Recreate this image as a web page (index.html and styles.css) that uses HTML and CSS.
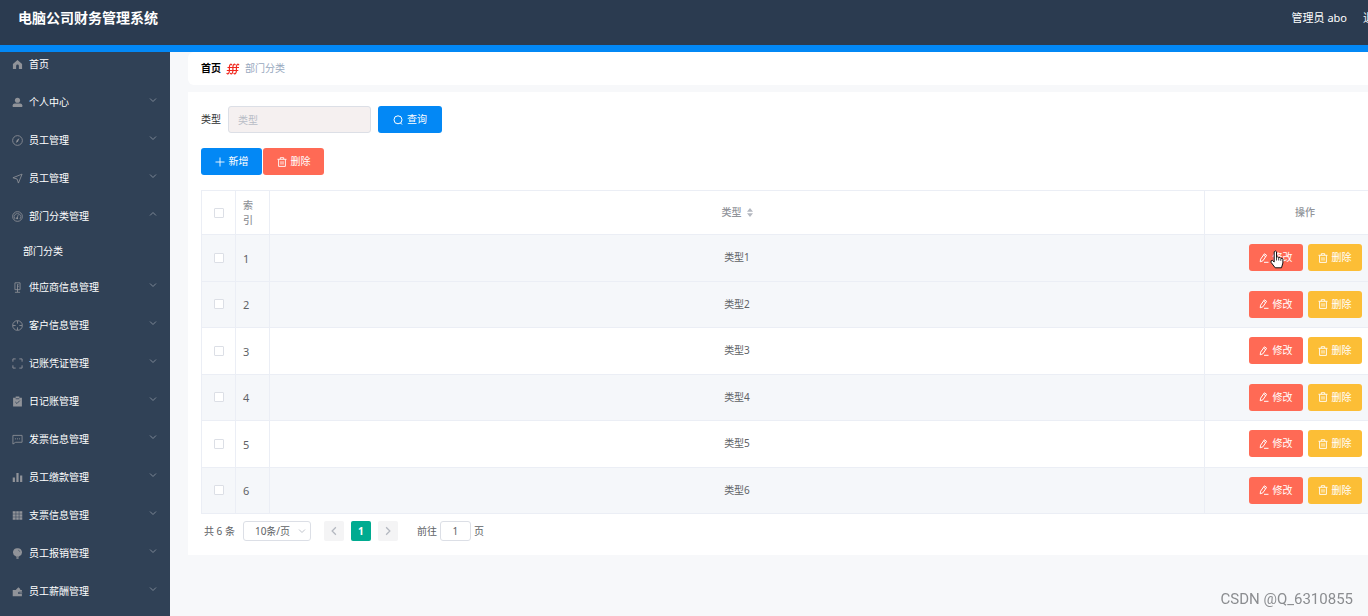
FILE: index.html
```html
<!DOCTYPE html>
<html lang="zh-CN">
<head>
<meta charset="utf-8">
<title>电脑公司财务管理系统</title>
<link rel="stylesheet" href="styles.css">
</head>
<body>
<svg class="sprite" aria-hidden="true">
  <symbol id="down" viewBox="0 0 8 8"><path d="M1 2.5 4 5.5 7 2.5" fill="none" stroke="currentColor"/></symbol>
  <symbol id="edit" viewBox="0 0 10 10"><path d="M1.2 8.8 1.6 6.2 5.4 .8 7.6 2.3 3.9 7.8 1.2 8.8M4.6 2.1 6.7 3.6M5 9.3H9.5" fill="none" stroke="currentColor"/></symbol>
  <symbol id="trash" viewBox="0 0 10 10"><path d="M.5 2.3H9.5M3.3 2V.7H6.7V2M1.6 2.5V9.4H8.4V2.5M4 4.2V7.6M6 4.2V7.6" fill="none" stroke="currentColor" stroke-width=".9"/></symbol>
</svg>
<div class="app">
  <header class="header">
    <h1 class="title">电脑公司财务管理系统</h1>
    <div class="user"><span>管理员 abo</span><a class="logout" href="#">退出登录</a></div>
  </header>
  <div class="body">
    <nav class="side">
      <a class="item home" href="#"><svg class="ico" viewBox="0 0 12 12"><path d="M6 1 11 5.5V11H7.5V7.5A1.5 1.5 0 0 0 4.5 7.5V11H1V5.5Z" fill="currentColor"/></svg>首页</a>
      <a class="item" href="#"><svg class="ico" viewBox="0 0 12 12"><circle cx="6" cy="3.6" r="2.8" fill="currentColor"/><path d="M.8 11V9Q.8 7 3 7H9Q11.2 7 11.2 9V11Z" fill="currentColor"/></svg>个人中心<svg class="arrow"><use href="#down"/></svg></a>
      <a class="item" href="#"><svg class="ico" viewBox="0 0 12 12"><circle cx="6" cy="6" r="5.3" fill="none" stroke="currentColor" stroke-width=".9"/><path d="M8.2 3.4 6.7 6.8 4.2 8.6 5.3 5.4Z" fill="currentColor"/></svg>员工管理<svg class="arrow"><use href="#down"/></svg></a>
      <a class="item" href="#"><svg class="ico" viewBox="0 0 12 12"><path d="M1 5.2 11 1.2 7 11 5.6 6.6Z" fill="none" stroke="currentColor" stroke-width=".9"/></svg>员工管理<svg class="arrow"><use href="#down"/></svg></a>
      <a class="item" href="#"><svg class="ico" viewBox="0 0 12 12"><circle cx="6" cy="6" r="5.3" fill="none" stroke="currentColor" stroke-width=".9"/><path d="M3.4 8.8A3.6 3.6 0 1 1 8.6 8.8M6.8 3.8 5.6 8" fill="none" stroke="currentColor" stroke-width=".8"/><circle cx="5.6" cy="8" r="1.1" fill="currentColor"/></svg>部门分类管理<svg class="arrow open"><use href="#down"/></svg></a>
      <a class="sub" href="#">部门分类</a>
      <a class="item" href="#"><svg class="ico" viewBox="0 0 12 12"><path d="M3.2.9H8.8V8.4H3.2ZM6 2.5V11M3.2 11.2H8.8M6 3H7.2M6 5H7.2" fill="none" stroke="currentColor" stroke-width=".9"/></svg>供应商信息管理<svg class="arrow"><use href="#down"/></svg></a>
      <a class="item" href="#"><svg class="ico" viewBox="0 0 12 12"><path d="M6 .7A5.3 5.3 0 1 0 6 11.3 5.3 5.3 0 1 0 6 .7M6 1V4M6 8V11M1 6H4M8 6H11" fill="none" stroke="currentColor" stroke-width=".9"/></svg>客户信息管理<svg class="arrow"><use href="#down"/></svg></a>
      <a class="item" href="#"><svg class="ico" viewBox="0 0 12 12"><path d="M1 4V1H4M8 1H11V4M11 8V11H8M4 11H1V8" fill="none" stroke="currentColor"/></svg>记账凭证管理<svg class="arrow"><use href="#down"/></svg></a>
      <a class="item" href="#"><svg class="ico" viewBox="0 0 12 12"><path d="M1.2 2H4V.6H8V2H10.8V11.5H1.2Z" fill="currentColor"/><path d="M3.6 6.5 5.4 8.2 8.5 5M4 3H8" fill="none" stroke="#304156" stroke-width=".9"/></svg>日记账管理<svg class="arrow"><use href="#down"/></svg></a>
      <a class="item" href="#"><svg class="ico" viewBox="0 0 12 12"><path d="M1 1.5H11V9H4L1 11ZM3.2 5.3H4.4M5.4 5.3H6.6M7.6 5.3H8.8" fill="none" stroke="currentColor" stroke-width=".9"/></svg>发票信息管理<svg class="arrow"><use href="#down"/></svg></a>
      <a class="item" href="#"><svg class="ico" viewBox="0 0 12 12"><path d="M.8 6H3.2V11H.8ZM4.8 1.2H7.2V11H4.8ZM8.8 3.8H11.2V11H8.8Z" fill="currentColor"/></svg>员工缴款管理<svg class="arrow"><use href="#down"/></svg></a>
      <a class="item" href="#"><svg class="ico" viewBox="0 0 12 12"><path d="M.8 1.3H4V4H.8ZM4.6 1.3H7.4V4H4.6ZM8 1.3H11.2V4H8ZM.8 4.7H4V7.3H.8ZM4.6 4.7H7.4V7.3H4.6ZM8 4.7H11.2V7.3H8ZM.8 8H4V10.7H.8ZM4.6 8H7.4V10.7H4.6ZM8 8H11.2V10.7H8Z" fill="currentColor"/></svg>支票信息管理<svg class="arrow"><use href="#down"/></svg></a>
      <a class="item" href="#"><svg class="ico" viewBox="0 0 12 12"><path d="M6 .2A4.5 4.5 0 0 1 8.2 8.8L7.5 9.5H4.5L3.8 8.8A4.5 4.5 0 0 1 6 .2M4.8 10.2H7.2V11.7H4.8Z" fill="currentColor"/><path d="M6.5 2.2A2.8 2.8 0 0 1 8.7 4.5" fill="none" stroke="#304156" stroke-width=".5"/></svg>员工报销管理<svg class="arrow"><use href="#down"/></svg></a>
      <a class="item" href="#"><svg class="ico" viewBox="0 0 12 12"><path d="M.8 4.3H4L7 1.3 9 3.3V4.3H10.8V6.2H8A1.2 1.2 0 0 0 8 8.8H10.8V11.2H.8Z" fill="currentColor"/><path d="M8 7H11.2V8.1H8Z" fill="currentColor"/></svg>员工薪酬管理<svg class="arrow"><use href="#down"/></svg></a>
    </nav>
    <main class="main">
      <div class="crumbs"><b>首页</b><svg class="sep" viewBox="0 0 14 12"><path d="M5.9 2.2Q5.4.7 4.3 1.5 3.5 2.2 3.4 4V8Q3.2 10 2.2 10.7 1.2 11.2.8 9.9M9.4 2.2Q8.9.7 7.8 1.5 7 2.2 6.9 4V8Q6.7 10 5.7 10.7 4.7 11.2 4.3 9.9M12.9 2.2Q12.4.7 11.3 1.5 10.5 2.2 10.4 4V8Q10.2 10 9.2 10.7 8.2 11.2 7.8 9.9M1.5 4.5H13M.8 7.5H12.3" fill="none" stroke="#f0281e" stroke-width="1.2"/></svg><span>部门分类</span></div>
      <section class="card">
        <form class="search">
          <label for="type">类型</label>
          <input id="type" class="field" type="text" placeholder="类型">
          <button class="btn blue query" type="button"><svg viewBox="0 0 10 10"><path d="M5 .8A4 4 0 1 0 5 8.8 4 4 0 1 0 5 .8M7.4 7.8 9 9.5" fill="none" stroke="currentColor"/></svg>查询</button>
        </form>
        <div class="tools">
          <button class="btn blue" type="button"><svg viewBox="0 0 10 10"><path d="M5 .5V9.5M.5 5H9.5" stroke="currentColor" stroke-width=".9"/></svg>新增</button>
          <button class="btn red" type="button"><svg><use href="#trash"/></svg>删除</button>
        </div>
        <table class="table">
          <thead><tr><th class="check"><input type="checkbox" aria-label="全选"></th><th class="idx">索引</th><th><span class="sortable">类型<svg class="sort" viewBox="0 0 6 9"><path d="M3 0 6 3.7H0ZM3 9 0 5.3H6Z" fill="#b4b8c0"/></svg></span></th><th class="ops">操作</th></tr></thead>
          <tbody>
            <tr class="hover"><td class="check"><input type="checkbox" aria-label="选择 1"></td><td class="idx">1</td><td>类型1</td><td class="ops"><div class="acts"><button class="btn red" type="button"><svg><use href="#edit"/></svg>修改</button><button class="btn gold" type="button"><svg><use href="#trash"/></svg>删除</button>
              <svg class="cursor" viewBox="0 0 14 19"><path d="M4.2 1.8Q5.5.2 6.5 1.8V7.2Q7.7 6.2 8.7 7.6 10 6.8 10.8 8.3 12.4 7.7 12.9 9.2V13L11.5 17.8H5.2L1 12.3Q.5 10.2 2.4 10.4L4.2 12Z" fill="#fff" stroke="#111"/><path d="M6.5 7V10.5M8.7 7.8V10.5M10.8 8.5V10.8" stroke="#111" stroke-width=".8"/></svg></div></td></tr>
            <tr><td class="check"><input type="checkbox" aria-label="选择 2"></td><td class="idx">2</td><td>类型2</td><td class="ops"><div class="acts"><button class="btn red" type="button"><svg><use href="#edit"/></svg>修改</button><button class="btn gold" type="button"><svg><use href="#trash"/></svg>删除</button></div></td></tr>
            <tr><td class="check"><input type="checkbox" aria-label="选择 3"></td><td class="idx">3</td><td>类型3</td><td class="ops"><div class="acts"><button class="btn red" type="button"><svg><use href="#edit"/></svg>修改</button><button class="btn gold" type="button"><svg><use href="#trash"/></svg>删除</button></div></td></tr>
            <tr><td class="check"><input type="checkbox" aria-label="选择 4"></td><td class="idx">4</td><td>类型4</td><td class="ops"><div class="acts"><button class="btn red" type="button"><svg><use href="#edit"/></svg>修改</button><button class="btn gold" type="button"><svg><use href="#trash"/></svg>删除</button></div></td></tr>
            <tr><td class="check"><input type="checkbox" aria-label="选择 5"></td><td class="idx">5</td><td>类型5</td><td class="ops"><div class="acts"><button class="btn red" type="button"><svg><use href="#edit"/></svg>修改</button><button class="btn gold" type="button"><svg><use href="#trash"/></svg>删除</button></div></td></tr>
            <tr><td class="check"><input type="checkbox" aria-label="选择 6"></td><td class="idx">6</td><td>类型6</td><td class="ops"><div class="acts"><button class="btn red" type="button"><svg><use href="#edit"/></svg>修改</button><button class="btn gold" type="button"><svg><use href="#trash"/></svg>删除</button></div></td></tr>
          </tbody>
        </table>
        <div class="pager">
          <span>共 6 条</span>
          <div class="size"><select aria-label="每页条数"><option>10条/页</option></select><svg><use href="#down"/></svg></div>
          <div class="pages">
            <button class="page" type="button" aria-label="上一页" disabled><svg class="prev"><use href="#down"/></svg></button>
            <button class="page current" type="button">1</button>
            <button class="page" type="button" aria-label="下一页" disabled><svg class="next"><use href="#down"/></svg></button>
          </div>
          <div class="jump"><label for="jump">前往</label><input id="jump" type="text" value="1"><span>页</span></div>
        </div>
      </section>
    </main>
  </div>
</div>
<div class="mark">CSDN @Q_6310855</div>
</body>
</html>
```
FILE: styles.css
```css
* { box-sizing: border-box; }
body {
  margin: 0;
  overflow: hidden;
  background: #f7f8fa;
  color: #606266;
  font: 10px/15px "Noto Sans", "Noto Sans CJK SC", sans-serif;
}
button, input, select { font: inherit; color: inherit; margin: 0; }
a { color: inherit; text-decoration: none; }
.sprite { position: absolute; width: 0; height: 0; }

/* The console is wider than the window and runs off its right edge. */
.app {
  width: calc(100% + 70px);
  min-height: 100vh;
  display: flex;
  flex-direction: column;
}
.header {
  display: flex;
  justify-content: space-between;
  height: 52px;
  padding: 8px 31px 0 18px;
  background: #2b3b50;
  border-bottom: 7px solid #0388f5;
  color: #fff;
}
.title { margin: 0; font-size: 14px; line-height: 20px; font-weight: 700; }
.user { display: flex; gap: 16px; font-size: 11px; line-height: 20px; }
.body { flex: 1; display: flex; }

.side { flex: none; width: 170px; background: #304156; color: #fff; }
.item {
  display: flex;
  align-items: center;
  height: 38px;
  padding: 0 13px 0 12px;
}
.home { height: 31px; padding-bottom: 7px; }
.ico { width: 11px; height: 11px; margin-right: 6px; color: #909399; }
.arrow { width: 8px; height: 8px; margin: 0 0 4px auto; color: #7d8795; }
.open { transform: rotate(180deg); }
.sub { display: block; padding: 9px 23px; }

.main { flex: 1; min-width: 0; padding: 0 18px; }
.crumbs {
  display: flex;
  align-items: center;
  gap: 5px;
  height: 33px;
  margin-bottom: 7px;
  padding: 0 13px;
  background: #fff;
  border-radius: 6px;
  color: #97a8be;
}
.crumbs b { color: #000; }
.sep { width: 14px; height: 12px; }
.card { padding: 14px 14px 14px 13px; background: #fff; }
.search { display: flex; align-items: center; gap: 7px; margin-bottom: 15px; color: #303133; }
.field {
  width: 143px;
  height: 27px;
  padding: 0 9px;
  border: 1px solid #dcdfe6;
  border-radius: 3px;
  background: #f5f0f0;
}
.field::placeholder { color: #b8bcc6; }
.btn {
  display: flex;
  align-items: center;
  justify-content: center;
  gap: 4px;
  height: 27px;
  width: 54px;
  padding: 0;
  border: 0;
  border-radius: 3px;
  color: #fff;
}
.btn svg { width: 10px; height: 10px; }
.blue { background: #0388f5; }
.red { background: #ff6a55; }
.gold { background: #fcbe36; }
.query { width: 64px; }
.tools { display: flex; gap: 1px; margin-bottom: 15px; }
.tools .btn { width: 61px; }

.table {
  width: 100%;
  table-layout: fixed;
  border-collapse: separate;
  border-spacing: 0;
  border: solid #ebeef5;
  border-width: 1px 0 0 1px;
}
.table th, .table td {
  padding: 0;
  border: solid #ebeef5;
  border-width: 0 1px 1px 0;
  text-align: center;
}
.table th { height: 44px; color: #909399; font-weight: 500; }
.table td { height: 47px; padding-bottom: 1px; }
.table tr:nth-child(even) td { height: 46px; background: #f5f7fa; }
.table .hover td { background: #f5f7fa; }
.table .check { width: 34px; }
.table .idx { width: 34px; padding: 0 8px 0 7px; text-align: left; }
.table td.idx { font-size: 11px; }
.table .ops { width: 201px; }
.check input {
  appearance: none;
  display: block;
  width: 10px;
  height: 10px;
  margin: 0 auto;
  border: 1px solid #dcdfe6;
  border-radius: 1px;
  background: #fff;
}
.sortable { display: inline-flex; align-items: center; gap: 5px; }
.sort { width: 6px; height: 9px; }
.acts { position: relative; display: flex; justify-content: center; gap: 5px; }
.cursor { position: absolute; left: 65px; top: 6px; width: 14px; height: 19px; }

.pager { display: flex; align-items: center; margin-top: 7px; padding-left: 3px; }
.size { position: relative; margin: 0 13px 0 8px; }
.size select {
  appearance: none;
  display: block;
  width: 68px;
  height: 20px;
  padding: 0 11px;
  border: 1px solid #dcdfe6;
  border-radius: 3px;
  background: #fff;
}
.size svg { position: absolute; right: 5px; top: 6px; width: 8px; height: 8px; color: #c0c4cc; }
.pages { display: flex; gap: 7px; }
.page {
  display: grid;
  place-items: center;
  width: 20px;
  height: 20px;
  padding: 0;
  border: 0;
  border-radius: 2px;
  background: #f4f4f5;
  color: #b4b8c0;
}
.page svg { width: 10px; height: 10px; }
.prev { transform: rotate(90deg); }
.next { transform: rotate(-90deg); }
.current { background: #00ab90; color: #fff; font-weight: 700; }
.jump { display: flex; align-items: center; gap: 3px; margin-left: 19px; }
.jump input {
  width: 31px;
  height: 20px;
  padding: 0;
  border: 1px solid #dcdfe6;
  border-radius: 3px;
  text-align: center;
}
.mark {
  position: fixed;
  right: 15px;
  bottom: 8px;
  color: #8b8d90;
  font: 15px/18px Roboto, "Liberation Sans", sans-serif;
}
```
